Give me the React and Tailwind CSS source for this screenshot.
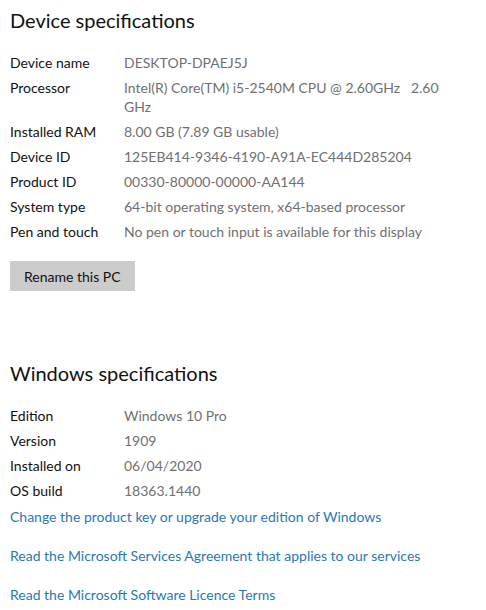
import React from 'react';

const DEVICE = [
  ['Device name', 'DESKTOP-DPAEJ5J'],
  ['Processor', 'Intel(R) Core(TM) i5-2540M CPU @ 2.60GHz\u00a0\u00a0 2.60 GHz'],
  ['Installed RAM', '8.00 GB (7.89 GB usable)'],
  ['Device ID', '125EB414-9346-4190-A91A-EC444D285204'],
  ['Product ID', '00330-80000-00000-AA144'],
  ['System type', '64-bit operating system, x64-based processor'],
  ['Pen and touch', 'No pen or touch input is available for this display'],
];

const WINDOWS = [
  ['Edition', 'Windows 10 Pro'],
  ['Version', '1909'],
  ['Installed on', '06/04/2020'],
  ['OS build', '18363.1440'],
];

const LINKS = [
  'Change the product key or upgrade your edition of Windows',
  'Read the Microsoft Services Agreement that applies to our services',
  'Read the Microsoft Software Licence Terms',
];

function SpecRow({ label, value }) {
  return (
    <div className="flex items-start">
      <div className="w-[114px] shrink-0 text-[#111]">{label}</div>
      <div className="w-[318px] text-[#707070]">{value}</div>
    </div>
  );
}

export default function App() {
  return (
    <div className="w-[486px] h-[610px] bg-white overflow-hidden px-[10px] text-[14px] leading-[19px]" style={{ fontFamily: 'Lato, "Open Sans", sans-serif' }}>
      <h1 className="text-[20px] leading-[26px] text-[#111] pt-[7px]">Device specifications</h1>
      <div className="mt-[20px] flex flex-col gap-[6px]">
        {DEVICE.map(([l, v]) => <SpecRow key={l} label={l} value={v} />)}
      </div>
      <button className="mt-[20px] h-[30px] px-[14px] bg-[#cccccc] text-[#111]">Rename this PC</button>

      <h1 className="mt-[69px] text-[20px] leading-[26px] text-[#111]">Windows specifications</h1>
      <div className="mt-[20px] flex flex-col gap-[6px]">
        {WINDOWS.map(([l, v]) => <SpecRow key={l} label={l} value={v} />)}
      </div>
      <div className="mt-[7px] flex flex-col gap-[20px]">
        {LINKS.map((t) => <a key={t} className="text-[#2a78b4]">{t}</a>)}
      </div>
    </div>
  );
}
